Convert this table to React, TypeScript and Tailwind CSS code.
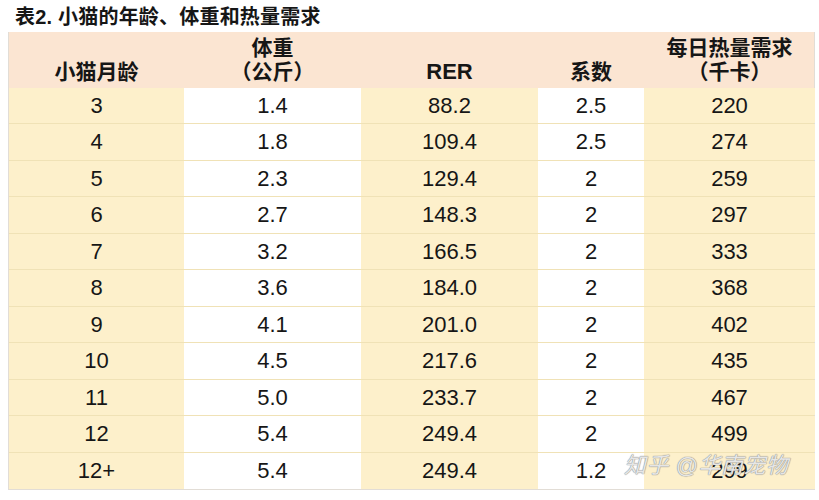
import React from "react";

const rows: [string, string, string, string, string][] = [
  ["3", "1.4", "88.2", "2.5", "220"],
  ["4", "1.8", "109.4", "2.5", "274"],
  ["5", "2.3", "129.4", "2", "259"],
  ["6", "2.7", "148.3", "2", "297"],
  ["7", "3.2", "166.5", "2", "333"],
  ["8", "3.6", "184.0", "2", "368"],
  ["9", "4.1", "201.0", "2", "402"],
  ["10", "4.5", "217.6", "2", "435"],
  ["11", "5.0", "233.7", "2", "467"],
  ["12", "5.4", "249.4", "2", "499"],
  ["12+", "5.4", "249.4", "1.2", "299"],
];

const font = { fontFamily: '"Liberation Sans", Arial, "Noto Sans CJK SC", sans-serif' };

export default function App() {
  return (
    <div className="w-[819px] h-[500px] bg-white text-[#161616] overflow-hidden relative" style={font}>
      <div className="pl-[15px] pt-[4px] h-[32px] text-[20px] font-bold leading-[26px] tracking-[0.2px]">
        表2. 小猫的年龄、体重和热量需求
      </div>
      <div className="ml-[8px] w-[807px] border border-[#e2ddd6] border-t-0">
        <div className="grid grid-cols-[175px_177px_177px_106px_171px] h-[56px] bg-[#fbe5d2] text-[21px] font-bold leading-[24px] text-center">
          <div className="flex items-end justify-center pb-[4px]">小猫月龄</div>
          <div className="flex flex-col items-center justify-end pb-[4px]">
            <span>体重</span>
            <span>（公斤）</span>
          </div>
          <div className="flex items-end justify-center pb-[4px] text-[22px]">RER</div>
          <div className="flex items-end justify-center pb-[4px]">系数</div>
          <div className="flex flex-col items-center justify-end pb-[4px]">
            <span>每日热量需求</span>
            <span>（千卡）</span>
          </div>
        </div>
        {rows.map((r, i) => (
          <div
            key={i}
            className={`grid grid-cols-[175px_177px_177px_106px_171px] text-[22px] text-center ${
              i % 2 === 0 ? "h-[36px] leading-[35px]" : "h-[37px] leading-[36px]"
            } ${i < rows.length - 1 ? "border-b border-[#f0e2b6]" : ""}`}
          >
            <div className="bg-[#fdf0cb]">{r[0]}</div>
            <div className="bg-white">{r[1]}</div>
            <div className="bg-[#fdf0cb]">{r[2]}</div>
            <div className="bg-white">{r[3]}</div>
            <div className="bg-[#fdf0cb]">{r[4]}</div>
          </div>
        ))}
      </div>
      <div
        className="absolute left-[624px] top-[451px] text-[22px] leading-[30px] italic text-[#e6e6e6] tracking-[0.5px]"
        style={{ textShadow: "0 0 1px #888, 0 0 1px #888" }}
      >
        知乎 @华南宠物
      </div>
    </div>
  );
}
